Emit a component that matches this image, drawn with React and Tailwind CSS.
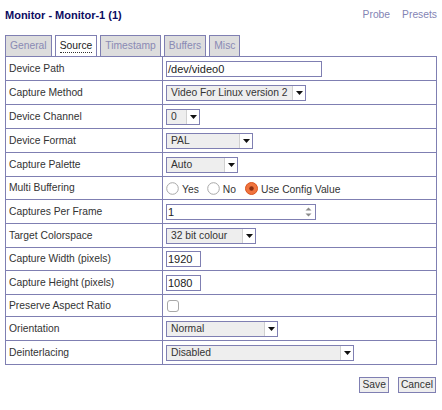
import React from 'react';

const BORDER = 'border-[#7f7fb2]';

const Arrow = () => (
  <span className="flex w-[13px] items-center justify-center border-l border-[#d0d0d0] bg-white">
    <svg width="7" height="4" viewBox="0 0 7 4">
      <path d="M0 0h7L3.5 4z" fill="#111" />
    </svg>
  </span>
);

const Select = ({ value, w }) => (
  <div className={`flex h-[16px] items-stretch border ${BORDER} bg-[#eeeeee] ${w}`}>
    <span className="flex-1 truncate pl-[4px] leading-[14px] text-[#333]">{value}</span>
    <Arrow />
  </div>
);

const TextInput = ({ value, w, spinner }) => (
  <div className={`flex h-[16px] items-center border ${BORDER} bg-white ${w}`}>
    <span className="flex-1 pl-[1px] text-[11px] leading-[14px] text-[#222]">{value}</span>
    {spinner && (
      <svg className="mr-[3px]" width="7" height="12" viewBox="0 0 7 12">
        <path d="M0.5 4.5L3.5 1.5L6.5 4.5z" fill="#8a8a8a" />
        <path d="M0.5 7.5L3.5 10.5L6.5 7.5z" fill="#8a8a8a" />
      </svg>
    )}
  </div>
);

const Radio = ({ checked }) =>
  checked ? (
    <svg width="13" height="13" viewBox="0 0 13 13">
      <circle cx="6.5" cy="6.5" r="6" fill="#f0743e" stroke="#d9541f" />
      <circle cx="6.5" cy="6.5" r="2.2" fill="#8a2e10" />
    </svg>
  ) : (
    <svg width="13" height="13" viewBox="0 0 13 13">
      <circle cx="6.5" cy="6.5" r="5.8" fill="#fff" stroke="#a8a8a8" />
    </svg>
  );

const rows = [
  { label: 'Device Path', h: 'h-[24px]', ctrl: <TextInput value="/dev/video0" w="w-[156px]" /> },
  { label: 'Capture Method', h: 'h-[24px]', ctrl: <Select value="Video For Linux version 2" w="w-[140px]" /> },
  { label: 'Device Channel', h: 'h-[24px]', ctrl: <Select value="0" w="w-[34px]" /> },
  { label: 'Device Format', h: 'h-[24px]', ctrl: <Select value="PAL" w="w-[87px]" /> },
  { label: 'Capture Palette', h: 'h-[24px]', ctrl: <Select value="Auto" w="w-[72px]" /> },
  {
    label: 'Multi Buffering',
    h: 'h-[23px]',
    ctrl: (
      <div className="flex items-center text-[#333]">
        <Radio />
        <span className="ml-[3px] mr-[8px] mt-[3px]">Yes</span>
        <Radio />
        <span className="ml-[3px] mr-[9px] mt-[3px]">No</span>
        <Radio checked />
        <span className="ml-[3px] mt-[3px]">Use Config Value</span>
      </div>
    ),
  },
  { label: 'Captures Per Frame', h: 'h-[24px]', ctrl: <TextInput value="1" w="w-[150px]" spinner /> },
  { label: 'Target Colorspace', h: 'h-[24px]', ctrl: <Select value="32 bit colour" w="w-[90px]" /> },
  { label: 'Capture Width (pixels)', h: 'h-[23px]', ctrl: <TextInput value="1920" w="w-[35px]" /> },
  { label: 'Capture Height (pixels)', h: 'h-[24px]', ctrl: <TextInput value="1080" w="w-[35px]" /> },
  {
    label: 'Preserve Aspect Ratio',
    h: 'h-[22px]',
    ctrl: <div className="ml-[1px] h-[12px] w-[12px] rounded-[3px] border border-[#a8a8a8] bg-white" />,
  },
  { label: 'Orientation', h: 'h-[24px]', ctrl: <Select value="Normal" w="w-[112px]" /> },
  { label: 'Deinterlacing', h: 'h-[24px]', ctrl: <Select value="Disabled" w="w-[188px]" /> },
];

const tabs = ['General', 'Source', 'Timestamp', 'Buffers', 'Misc'];

export default function App() {
  return (
    <div className="h-[410px] w-[442px] bg-white font-[Liberation_Sans,Arial,sans-serif] text-[10.3px] text-[#333]">
      {/* Header */}
      <div className="flex h-[30px] items-center justify-between px-[5px]">
        <h2 className="text-[11px] font-bold text-[#0c0c62]">Monitor - Monitor-1 (1)</h2>
        <div className="flex gap-[12px] text-[#8484b4]">
          <span>Probe</span>
          <span>Presets</span>
        </div>
      </div>

      {/* Tabs */}
      <div className="mt-[5px] flex gap-[3px] px-[5px]">
        {tabs.map((t) => (
          <div
            key={t}
            className={`flex h-[21px] items-center border border-b-0 ${BORDER} px-[4px] ${
              t === 'Source' ? 'bg-white text-[#222]' : 'bg-[#dddddd] text-[#8a8ab4]'
            }`}
          >
            <span className={t === 'Source' ? 'border-b border-dotted border-[#333] leading-[12px]' : ''}>{t}</span>
          </div>
        ))}
      </div>

      {/* Table */}
      <div className={`mx-[5px] border-x border-b ${BORDER}`}>
        {rows.map((r) => (
          <div key={r.label} className={`flex border-t ${BORDER} ${r.h}`}>
            <div className={`flex w-[157px] items-center border-r ${BORDER} pl-[3px]`}>{r.label}</div>
            <div className="flex flex-1 items-center pl-[3px]">{r.ctrl}</div>
          </div>
        ))}
      </div>

      {/* Buttons */}
      <div className="mt-[12px] flex justify-end gap-[9px] pr-[6px]">
        <button className={`h-[16px] border ${BORDER} bg-[#eeeeee] px-[2px] leading-[14px] text-[#333]`}>Save</button>
        <button className={`h-[16px] border ${BORDER} bg-[#eeeeee] px-[2px] leading-[14px] text-[#333]`}>Cancel</button>
      </div>
    </div>
  );
}
